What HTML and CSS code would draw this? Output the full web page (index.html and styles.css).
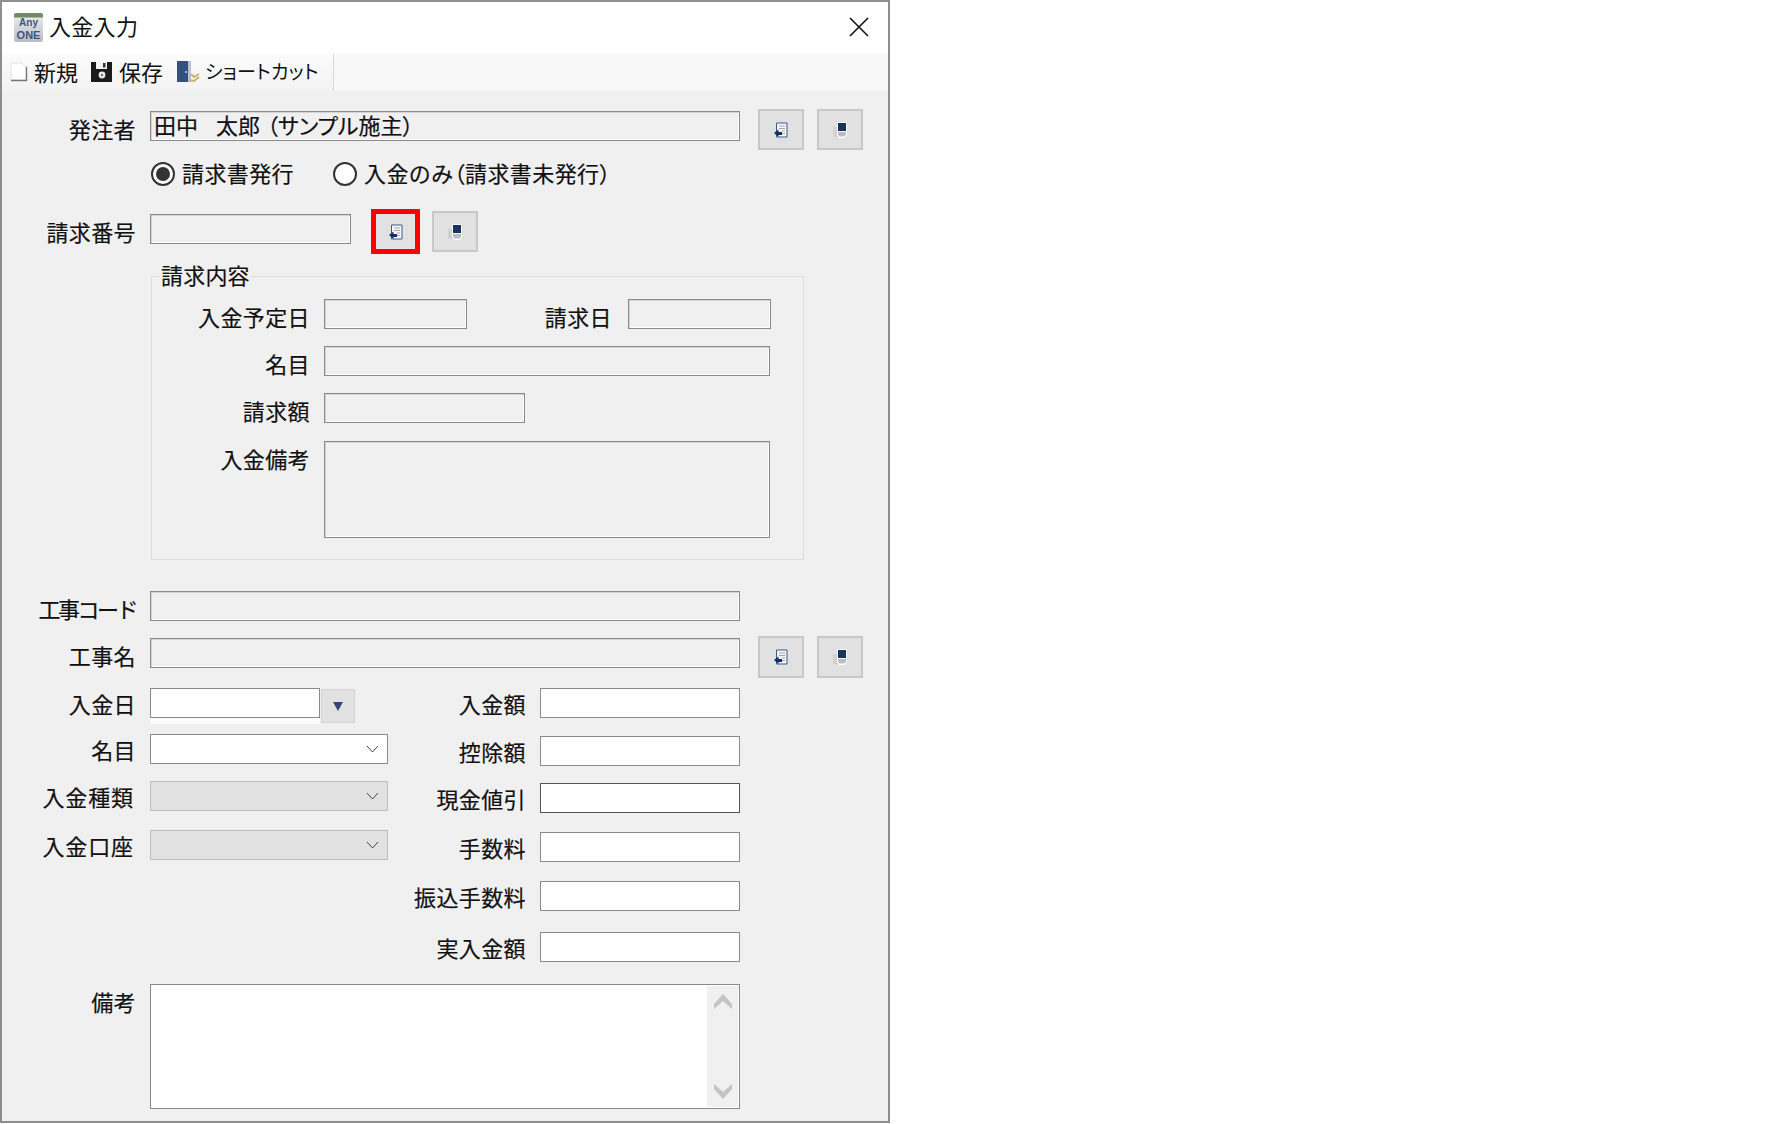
FILE: index.html
```html
<!DOCTYPE html>
<html lang="ja">
<head>
	<meta charset="utf-8">
	<title>入金入力</title>
	<link rel="stylesheet" href="styles.css">
</head>
<body>

<div class="window">

	<div class="titlebar">
		<div class="app-icon"><span class="app-any">Any</span><span class="app-one">ONE</span></div>
		<div class="title">入金入力</div>
		<svg class="close" width="20" height="20" viewBox="0 0 20 20"><path d="M1 1 L19 19 M19 1 L1 19" stroke="#111" stroke-width="1.6" fill="none"/></svg>
	</div>

	<div class="toolbar">
		<div class="tools">
			<div class="tool tool-new">
				<svg width="18" height="20" viewBox="0 0 18 20"><path d="M1 1 H12 L16 5 V18 H1 Z" fill="#fff" stroke="#e2e2e2"/><path d="M1 18.5 H16.5 V5" stroke="#777" stroke-width="1.4" fill="none"/></svg>
				<span>新規</span>
			</div>
			<div class="tool tool-save">
				<svg width="22" height="22" viewBox="0 0 22 22"><path d="M0 1 H21 V21 H0 Z" fill="#1b1b1b"/><path d="M5 1 H16 V8 H5 Z" fill="#f4f4f4"/><rect x="12" y="2" width="2.5" height="4.5" fill="#333"/><circle cx="11" cy="14" r="3.4" fill="#e8e8e8"/><circle cx="11" cy="14" r="1" fill="#444"/></svg>
				<span>保存</span>
			</div>
			<div class="tool tool-short">
				<svg width="24" height="24" viewBox="0 0 24 24"><rect x="1" y="1" width="11" height="21" fill="#34507c"/><rect x="12" y="1" width="3" height="21" fill="#b9c2cd"/><path d="M15 14 L18 17 L23 14 M13 20 L18 21 L23 17" stroke="#c9b36a" stroke-width="2" fill="none"/><circle cx="10" cy="12" r="1" fill="#d8d8d8"/></svg>
				<span>ショートカット</span>
			</div>
		</div>
	</div>

	<div class="form">

		<div class="row row-owner">
			<div class="label label-main">発注者</div>
			<div class="field field-main off">田中<span class="name-gap"></span>太郎<span class="paren paren-gap">（サンプル施主）</span></div>
			<div class="btn btn-first">
				<svg class="ico" width="14" height="16" viewBox="0 0 14 16"><use href="#ico-doc"/></svg>
			</div>
			<div class="btn btn-next">
				<svg class="ico" width="14" height="16" viewBox="0 0 14 16"><use href="#ico-del"/></svg>
			</div>
		</div>

		<div class="row row-radio">
			<div class="radio on"></div>
			<div class="radio-text">請求書発行</div>
			<div class="radio radio-second"></div>
			<div class="radio-text">入金のみ<span class="paren">（請求書未発行）</span></div>
		</div>

		<div class="row row-number">
			<div class="label label-main label-number">請求番号</div>
			<div class="field field-number off"></div>
			<div class="btn btn-marked">
				<svg class="ico" width="14" height="16" viewBox="0 0 14 16"><use href="#ico-doc"/></svg>
			</div>
			<div class="btn btn-after">
				<svg class="ico" width="14" height="16" viewBox="0 0 14 16"><use href="#ico-del"/></svg>
			</div>
		</div>

		<fieldset class="group">
			<legend>請求内容</legend>
			<div class="row">
				<div class="label label-group">入金予定日</div>
				<div class="field w143 off"></div>
				<div class="label label-date">請求日</div>
				<div class="field w143 off"></div>
			</div>
			<div class="row mt17">
				<div class="label label-group">名目</div>
				<div class="field w446 off"></div>
			</div>
			<div class="row mt17">
				<div class="label label-group">請求額</div>
				<div class="field w201 off"></div>
			</div>
			<div class="row mt18">
				<div class="label label-group">入金備考</div>
				<div class="field w446 h97 off"></div>
			</div>
		</fieldset>

		<div class="row row-code">
			<div class="label label-main tight">工事コード</div>
			<div class="field field-main off"></div>
		</div>
		<div class="row row-work">
			<div class="label label-main">工事名</div>
			<div class="field field-main off"></div>
			<div class="btn btn-first">
				<svg class="ico" width="14" height="16" viewBox="0 0 14 16"><use href="#ico-doc"/></svg>
			</div>
			<div class="btn btn-next">
				<svg class="ico" width="14" height="16" viewBox="0 0 14 16"><use href="#ico-del"/></svg>
			</div>
		</div>

		<div class="columns">
			<div class="col-left">
				<div class="row">
					<div class="label label-main">入金日</div>
					<div class="date-input"></div>
					<div class="date-btn"><svg width="10" height="9" viewBox="0 0 10 9"><path d="M0 0 H10 L5 9 Z" fill="#2f4a72"/></svg></div>
				</div>
				<div class="row mt11">
					<div class="label label-main">名目</div>
					<div class="select">
						<svg width="13" height="8" viewBox="0 0 13 8"><path d="M1 1 L6.5 7 L12 1" stroke="#444" stroke-width="1" fill="none"/></svg>
					</div>
				</div>
				<div class="row mt17">
					<div class="label label-main label-far">入金種類</div>
					<div class="select select-off">
						<svg width="13" height="8" viewBox="0 0 13 8"><path d="M1 1 L6.5 7 L12 1" stroke="#444" stroke-width="1" fill="none"/></svg>
					</div>
				</div>
				<div class="row mt19">
					<div class="label label-main label-far">入金口座</div>
					<div class="select select-off">
						<svg width="13" height="8" viewBox="0 0 13 8"><path d="M1 1 L6.5 7 L12 1" stroke="#444" stroke-width="1" fill="none"/></svg>
					</div>
				</div>
			</div>
			<div class="col-right">
				<div class="row">
					<div class="label label-right">入金額</div>
					<div class="field w200"></div>
				</div>
				<div class="row mt18">
					<div class="label label-right">控除額</div>
					<div class="field w200"></div>
				</div>
				<div class="row mt17">
					<div class="label label-right">現金値引</div>
					<div class="field w200 dark"></div>
				</div>
				<div class="row mt19">
					<div class="label label-right">手数料</div>
					<div class="field w200"></div>
				</div>
				<div class="row mt19">
					<div class="label label-right">振込手数料</div>
					<div class="field w200"></div>
				</div>
				<div class="row mt21">
					<div class="label label-right">実入金額</div>
					<div class="field w200"></div>
				</div>
			</div>
		</div>

		<div class="row row-note">
			<div class="label label-main">備考</div>
			<div class="memo">
				<div class="scrollbar">
					<svg width="18" height="16" viewBox="0 0 18 16"><path d="M0 11 L9 1 L18 11 V16 L9 8 L0 16 Z" fill="#c4c4c4"/></svg>
					<svg width="18" height="16" viewBox="0 0 18 16"><path d="M0 0 L9 8 L18 0 V5 L9 15 L0 5 Z" fill="#c4c4c4"/></svg>
				</div>
			</div>
		</div>

	</div>
</div>

<svg class="defs" width="0" height="0">
	<symbol id="ico-doc" viewBox="0 0 14 16">
		<path d="M2.5 1 H13 V15 H2.5 Z" fill="#f6f6f6" stroke="#3a5a86"/>
		<path d="M5 4 H11 M5 6.5 H11 M8 9 H11 M8 11.5 H11" stroke="#a4a4a4"/>
		<path d="M0 11 L4.5 7.5 V10 H8 V13 H4.5 V15 Z" fill="#13305c"/>
	</symbol>
	<symbol id="ico-del" viewBox="0 0 14 16">
		<rect x="0" y="5" width="5" height="10" fill="#d2d2d2"/>
		<path d="M4 0 H14 V13 L12 16 H6 L4 13 Z" fill="#fff"/>
		<rect x="5" y="1" width="8" height="8" fill="#17335e"/>
		<path d="M5 10 H13 V12.5 L11.5 14.5 H6.5 L5 12.5 Z" fill="#b8bcc2"/>
	</symbol>
</svg>

</body>
</html>
```

FILE: styles.css
```css
body { margin: 0; background: #fff; font-family: "Noto Sans CJK JP", "Noto Sans", sans-serif; color: #111; }
.defs { display: block; }

.window { width: 890px; height: 1123px; box-sizing: border-box; border: 2px solid #8e8e8e; background: #f0f0f0; }

.titlebar { height: 52px; background: #fff; display: flex; align-items: center; }
.app-icon { width: 29px; height: 29px; margin-left: 12px; margin-top: -1px; border-radius: 2px; background: linear-gradient(#728a68 0, #728a68 4px, #e4e6e6 5px, #b7bec8 100%); display: flex; flex-direction: column; align-items: center; justify-content: flex-end; font-family: "Liberation Sans", sans-serif; font-weight: bold; color: #3f5478; }
.app-any { font-size: 10px; line-height: 12px; }
.app-one { font-size: 11px; line-height: 13px; }
.title { font-size: 22px; letter-spacing: 0.3px; margin-left: 6px; line-height: 30px; margin-top: -7px; }
.close { margin-left: auto; margin-right: 19px; margin-top: -3px; }

.toolbar { height: 37px; background: #f8f8f8; }
.tools { width: 332px; height: 37px; box-sizing: border-box; border-right: 1px solid #d8d8d8; background: linear-gradient(#fbfbfb, #f3f3f3); display: flex; align-items: center; font-size: 22px; }
.tool { display: flex; align-items: center; flex: none; margin-top: -2px; }
.tool svg { flex: none; }
.tool span { line-height: 30px; white-space: nowrap; margin-top: -2px; }
.tool-new { margin-left: 8px; }
.tool-new span { margin-left: 6px; }
.tool-save { margin-left: 13px; }
.tool-save span { margin-left: 6px; }
.tool-short { margin-left: 13px; }
.tool-short span { margin-left: 5px; font-size: 19px; letter-spacing: 0.2px; font-feature-settings: "palt"; }

.row { display: flex; align-items: flex-start; }
.mt11 { margin-top: 11px; }
.mt17 { margin-top: 17px; }
.mt18 { margin-top: 18px; }
.mt19 { margin-top: 19px; }
.mt21 { margin-top: 21px; }

.label { font-size: 22px; letter-spacing: 0.4px; line-height: 30px; height: 30px; box-sizing: border-box; text-align: right; padding-top: 2px; flex: none; white-space: nowrap; -webkit-text-stroke: 0.2px #111; }
.label-main { width: 134px; margin-right: 14px; }
.label-number { margin-top: 5px; }
.label-far { width: 132px; margin-right: 16px; letter-spacing: 0.9px; }
.label-group { width: 158px; margin-right: 14px; }
.label-date { width: 145px; margin-right: 16px; }
.label-right { width: 138px; margin-right: 14px; }
.tight { letter-spacing: -2.5px; }

.field { height: 30px; box-sizing: border-box; border: 1px solid #8a8a8a; background: #fff; font-size: 22px; line-height: 25px; padding-left: 3px; white-space: nowrap; flex: none; -webkit-text-stroke: 0.2px #111; }
.field.off { background: #f0f0f0; box-shadow: inset 1px 1px 0 #d4d4d4, inset -1px -1px 0 #fff; }
.field.dark { border-color: #555; }
.field-main { width: 590px; }
.field-number { width: 201px; margin-top: 5px; }
.name-gap { display: inline-block; width: 18px; }
.paren-gap { margin-left: 7px; }
.w143 { width: 143px; }
.w200 { width: 200px; }
.w201 { width: 201px; }
.w446 { width: 446px; }
.h97 { height: 97px; }

.btn { width: 46px; height: 41px; box-sizing: border-box; border: 2px solid #c8c8c8; background: #e1e1e1; display: flex; align-items: center; justify-content: center; flex: none; }
.btn-first { margin-left: 18px; margin-top: -2px; }
.btn-next { margin-left: 13px; margin-top: -2px; }
.btn-marked { width: 49px; height: 45px; border: 5px solid #f00; margin-left: 20px; }
.btn-after { margin-left: 12px; margin-top: 2px; }

.row-owner { padding-top: 20px; }
.row-radio { margin-top: 10px; height: 28px; align-items: center; padding-left: 149px; }
.radio { width: 24px; height: 24px; box-sizing: border-box; border: 2px solid #333; border-radius: 50%; background: #fff; flex: none; display: flex; align-items: center; justify-content: center; }
.radio.on::after { content: ""; width: 14px; height: 14px; border-radius: 50%; background: #333; }
.radio-second { margin-left: 39px; }
.radio-text { font-size: 22px; letter-spacing: 0.4px; line-height: 28px; margin-left: 7px; margin-top: -5px; -webkit-text-stroke: 0.2px #111; }
.paren { font-feature-settings: "palt"; }
.row-number { margin-top: 21px; }

.group { width: 653px; height: 296px; box-sizing: border-box; margin: 10px 0 0 149px; padding: 11px 0 0 0; border: 1px solid #dcdcdc; min-width: 0; }
.group legend { font-size: 22px; letter-spacing: 0.2px; line-height: 20px; margin-left: 8px; padding: 0 1px 4px; -webkit-text-stroke: 0.2px #111; }

.row-code { margin-top: 31px; }
.row-work { margin-top: 17px; }
.row-work .btn { height: 42px; }

.columns { display: flex; margin-top: 10px; }
.columns .label { padding-top: 0; }
.col-left { width: 386px; flex: none; }
.date-input { width: 170px; height: 30px; box-sizing: border-box; border: 1px solid #8a8a8a; background: #fff; box-shadow: 0 6px 0 #fcfcfc; flex: none; }
.date-btn { width: 34px; height: 34px; margin-left: 1px; margin-top: 1px; box-sizing: border-box; border: 1px solid #d4d4d4; background: #e1e1e1; display: flex; align-items: center; justify-content: center; }
.select { width: 238px; height: 30px; box-sizing: border-box; border: 1px solid #8a8a8a; background: #fff; display: flex; align-items: center; justify-content: flex-end; padding-right: 8px; flex: none; }
.select-off { background: #e1e1e1; border-color: #bdbdbd; }

.row-note { margin-top: 22px; }
.memo { width: 590px; height: 125px; box-sizing: border-box; border: 1px solid #8a8a8a; background: #fff; display: flex; justify-content: flex-end; }
.scrollbar { width: 31px; margin: 1px 1px 1px 0; background: #f0f0f0; display: flex; flex-direction: column; align-items: center; justify-content: space-between; padding: 7px 0; box-sizing: border-box; }
```
